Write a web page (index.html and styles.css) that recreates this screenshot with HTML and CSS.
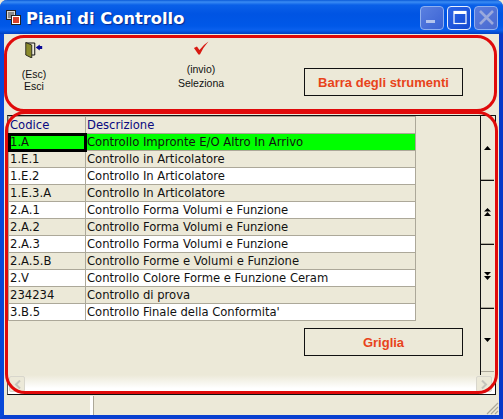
FILE: index.html
```html
<!DOCTYPE html>
<html lang="it">
<head>
<meta charset="utf-8">
<title>Piani di Controllo</title>
<link rel="stylesheet" href="styles.css">
</head>
<body>
<div class="window">
  <header class="titlebar">
    <svg class="appicon" width="16" height="16" viewBox="0 0 16 16">
      <rect x="0.5" y="0.5" width="9" height="9" fill="#d8d8d8" stroke="#222"/>
      <rect x="2" y="2" width="6" height="6" fill="#8a8a8a"/>
      <rect x="5.5" y="5.5" width="9" height="9" fill="#fff" stroke="#222"/>
      <rect x="7" y="7" width="6" height="6" fill="#d8402c"/>
    </svg>
    <span class="title">Piani di Controllo</span>
    <div class="controls">
      <div class="ctl ctl-dim"><svg width="21" height="21" viewBox="0 0 21 21"><rect x="4" y="13" width="9" height="3" fill="#b4c4ee"/></svg></div>
      <div class="ctl ctl-on"><svg width="21" height="21" viewBox="0 0 21 21"><rect x="5" y="4.5" width="12" height="12" fill="none" stroke="#fff" stroke-width="1.2"/><rect x="5" y="4" width="12" height="3" fill="#fff"/></svg></div>
      <div class="ctl ctl-off"><svg width="21" height="21" viewBox="0 0 21 21"><path d="M4 4 L17 17 M17 4 L4 17" stroke="#9aa9dc" stroke-width="2.6"/></svg></div>
    </div>
  </header>
  <section class="toolbar">
    <div class="tool tool-exit">
      <svg width="18" height="16" viewBox="0 0 18 16">
        <path d="M1 1 H10 V13 H7" fill="none" stroke="#111"/>
        <path d="M1 0.5 L7 3 V16 L1 13 Z" fill="#8a8a2c" stroke="#111" stroke-width="0.8"/>
        <path d="M11 5.5 L15 2.5 V4 H17.5 V7 H15 V8.5 Z" fill="#0a0a96"/>
      </svg>
      <span class="tool-text">(Esc)<br>Esci</span>
    </div>
    <div class="tool tool-select">
      <svg width="16" height="14" viewBox="0 0 16 14">
        <path d="M1 7 L4 5.5 L6.5 9 Q10 4 15.5 0.5 Q10.5 6 7 13.5 L5.5 13.5 Z" fill="#d81a12"/>
      </svg>
      <span class="tool-text">(invio)<br>Seleziona</span>
    </div>
    <div class="label-box toolbar-label">Barra degli strumenti</div>
    <div class="ring ring-toolbar"></div>
  </section>
  <section class="gridarea">
    <div class="gridframe">
      <div class="gridmain">
        <div class="tablewrap">
          <table class="data">
            <thead><tr><th class="c1">Codice</th><th class="c2">Descrizione</th></tr></thead>
            <tbody>
              <tr class="sel"><td class="cur">1.A</td><td>Controllo Impronte E/O Altro In Arrivo</td></tr>
              <tr class="odd"><td>1.E.1</td><td>Controllo in Articolatore</td></tr>
              <tr><td>1.E.2</td><td>Controllo In Articolatore</td></tr>
              <tr class="odd"><td>1.E.3.A</td><td>Controllo In Articolatore</td></tr>
              <tr><td>2.A.1</td><td>Controllo Forma Volumi e Funzione</td></tr>
              <tr class="odd"><td>2.A.2</td><td>Controllo Forma Volumi e Funzione</td></tr>
              <tr><td>2.A.3</td><td>Controllo Forma Volumi e Funzione</td></tr>
              <tr class="odd"><td>2.A.5.B</td><td>Controllo Forme e Volumi e Funzione</td></tr>
              <tr><td>2.V</td><td>Controllo Colore Forme e Funzione Ceram</td></tr>
              <tr class="odd"><td>234234</td><td>Controllo di prova</td></tr>
              <tr><td>3.B.5</td><td>Controllo Finale della Conformita'</td></tr>
            </tbody>
          </table>
        </div>
        <div class="vscroll">
          <div class="vbtn"><svg width="7" height="4" viewBox="0 0 7 4"><path d="M3.5 0 L7 4 H0 Z"/></svg></div>
          <div class="vbtn"><svg width="7" height="8" viewBox="0 0 7 8"><path d="M3.5 0 L7 3.5 H0 Z M3.5 4 L7 8 H0 Z"/></svg></div>
          <div class="vbtn"><svg width="7" height="8" viewBox="0 0 7 8"><path d="M0 0 H7 L3.5 3.5 Z M0 4 H7 L3.5 8 Z"/></svg></div>
          <div class="vbtn"><svg width="7" height="4" viewBox="0 0 7 4"><path d="M0 0 H7 L3.5 4 Z"/></svg></div>
        </div>
      </div>
      <div class="hscroll">
        <div class="hbtn"><svg width="7" height="9" viewBox="0 0 7 9"><path d="M6 0.5 L2 4.5 L6 8.5" fill="none" stroke="#c4c3bb" stroke-width="2"/></svg></div>
        <div class="hbtn"><svg width="7" height="9" viewBox="0 0 7 9"><path d="M1 0.5 L5 4.5 L1 8.5" fill="none" stroke="#c4c3bb" stroke-width="2"/></svg></div>
      </div>
    </div>
    <div class="label-box grid-label">Griglia</div>
    <div class="ring ring-grid"></div>
  </section>
  <footer class="statusbar">
    <div class="sb sb-a"></div>
    <div class="sb sb-b"></div>
    <svg class="grip" width="14" height="14" viewBox="0 0 14 14"><path d="M13 2 L2 13 M13 6 L6 13 M13 10 L10 13" stroke="#aca899" stroke-width="1.2"/></svg>
  </footer>
</div>
</body>
</html>
```

FILE: styles.css
```css
* { box-sizing: border-box; }
html, body { margin: 0; padding: 0; }
body { width: 503px; height: 419px; overflow: hidden; background: #ece9d8; font-family: "Liberation Sans", Arial, sans-serif; }

.window {
  width: 503px; height: 419px; display: flex; flex-direction: column;
  background: #ece9d8; border-left: 4px solid #0848d8; border-right: 4px solid #0838c8; border-bottom: 4px solid #0840d0;
  border-radius: 7px 7px 0 0; position: relative;
}
.titlebar {
  height: 34px; margin: 0 -4px; padding: 0 5px 0 6px; display: flex; align-items: center; flex: none;
  background: linear-gradient(#0a5ad8 0, #3a8cf4 2px, #0a60e8 5px, #0054e3 14px, #0058e8 26px, #0a60ee 30px, #0040c0 34px);
  border-radius: 7px 7px 0 0;
}
.appicon { flex: none; margin: 2px 4px 0 0; }
.title { color: #fff; font: bold 16.3px/20px "DejaVu Sans", sans-serif; text-shadow: 1px 1px 1px #0a2a90; margin-top: 3px; }
.controls { margin-left: auto; display: flex; gap: 3px; margin-top: 1px; }
.ctl { width: 24px; height: 24px; border-radius: 4px; border: 1px solid #8fb0f0; display: flex; align-items: center; justify-content: center; }
.ctl-dim { background: linear-gradient(135deg, #5a80e0, #3a62d4); }
.ctl-on { background: linear-gradient(135deg, #2a64e8, #1448d0); border-color: #e8f0ff; }
.ctl-off { background: linear-gradient(135deg, #5a7cdc, #4a6ad0); }

.toolbar { height: 78px; flex: none; position: relative; }
.tool { position: absolute; top: 0; display: flex; flex-direction: column; align-items: center; transform: translateX(-50%); }
.tool-exit { left: 30px; padding-top: 8px; }
.tool-select { left: 197px; padding-top: 7px; }
.tool-text { font-size: 10.5px; line-height: 12px; text-align: center; color: #111; white-space: nowrap; }
.tool-exit .tool-text { margin-top: 10px; }
.tool-select .tool-text { margin-top: 7px; line-height: 14px; }
.label-box {
  position: absolute; border: 1px solid #111; display: flex; align-items: center; justify-content: center;
  color: #e8431a; font-weight: bold; font-size: 13px;
}
.toolbar-label { left: 300px; top: 34px; width: 159px; height: 28px; }
.ring { position: absolute; border: 3px solid #e00a0a; pointer-events: none; }
.ring-toolbar { left: 0; top: 1px; width: 493px; height: 77px; border-radius: 20px; }

.gridarea { flex: 1; position: relative; padding: 3px 0 0 3px; min-height: 0; }
.gridframe { width: 489px; height: 280px; border: 1px solid #111; border-left-color: #555; display: flex; flex-direction: column; background: #ece9d8; }
.gridmain { flex: 1; display: flex; min-height: 0; }
.tablewrap { flex: 1; }
.data { border-collapse: collapse; table-layout: fixed; width: 408px; font: 11.6px "DejaVu Sans", sans-serif; color: #111; }
.data th, .data td { padding: 0 0 0 1px; height: 17px; line-height: 15px; border: 1px solid #aca899; white-space: nowrap; overflow: hidden; text-align: left; font-weight: normal; }
.data th { color: #0a0a80; background: #ece9d8; }
.data .c1 { width: 77px; }
.data tr { background: #fff; }
.data tr.odd { background: #ece9d8; }
.data tr.sel { background: #00ff00; }
.data td.cur { outline: 3px solid #000; outline-offset: -2px; }
.vscroll { width: 14px; margin-right: 1px; flex: none; display: flex; flex-direction: column; border-left: 1px solid #111; }
.vbtn { height: 64px; background: #ece9d8; border-bottom: 1px solid #aca899; border-top: 1px solid #111; display: flex; align-items: center; justify-content: center; }
.vbtn:first-child { border-top: 0; }
.vbtn svg { fill: #000; }
.hscroll { height: 19px; flex: none; display: flex; justify-content: space-between; padding: 1px 3px 1px 1px; background: linear-gradient(#ece9d8, #fff 70%, #fff); }
.hbtn { width: 16px; height: 16px; background: #ece9d8; border: 1px solid #d8d6cc; border-radius: 2px; display: flex; align-items: center; justify-content: center; }
.grid-label { left: 300px; top: 216px; width: 159px; height: 28px; }
.ring-grid { left: 1px; top: -1px; width: 493px; height: 283px; border-radius: 20px; }

.statusbar { height: 21px; flex: none; display: flex; position: relative; }
.sb { height: 19px; margin-top: 2px; background: #ece9d8; }
.sb-a { width: 89px; border-right: 3px solid #fff; }
.sb-b { flex: 1; border-left: 1px solid #aca899; }
.grip { position: absolute; right: 0; bottom: 0; }
```
